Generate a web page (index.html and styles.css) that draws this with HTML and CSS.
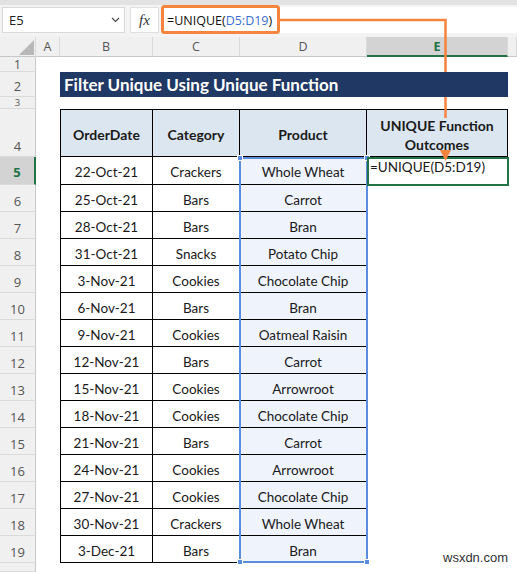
FILE: index.html
```html
<!DOCTYPE html>
<html>
<head>
<meta charset="utf-8">
<link rel="stylesheet" href="styles.css">
</head>
<body>
<div class="app">
  <div class="top"></div>
  <div class="fbar">
    <div class="namebox"><span>E5</span>
      <svg class="chev" width="9" height="6" viewBox="0 0 9 6"><path d="M1 1 L4.5 4.5 L8 1" fill="none" stroke="#444" stroke-width="1.1"/></svg>
    </div>
    <div class="fxbox"><span class="fx">fx</span></div>
    <div class="formula"><span>=UNIQUE(</span><span class="ref">D5:D19</span><span>)</span></div>
  </div>
  <div class="sheet">
    <!-- column headers -->
    <div class="ch corner"><svg width="36" height="20" viewBox="0 0 36 20"><polygon points="34,3 34,18 19,18" fill="#b8b8b8"/></svg></div>
    <div class="ch">A</div><div class="ch">B</div><div class="ch">C</div><div class="ch">D</div><div class="ch sel">E</div><div class="ch"></div>
    <!-- row 1 -->
    <div class="rh mid">1</div><div></div><div></div><div></div><div></div><div></div><div></div>
    <!-- row 2 -->
    <div class="rh">2</div><div></div><div class="title">Filter Unique Using Unique Function</div><div></div>
    <!-- row 3 -->
    <div class="rh clip">3</div><div></div><div></div><div></div><div></div><div></div><div></div>
    <!-- row 4 -->
    <div class="rh">4</div><div></div>
    <div class="t th first">OrderDate</div><div class="t th">Category</div><div class="t th">Product</div><div class="t th">UNIQUE Function<br>Outcomes</div><div></div>
    <!-- data -->
    <div class="rh sel">5</div><div></div><div class="t first">22-Oct-21</div><div class="t">Crackers</div><div class="t d">Whole Wheat</div><div class="ecell">=UNIQUE(D5:D19)</div><div></div>
    <div class="rh">6</div><div></div><div class="t first">25-Oct-21</div><div class="t">Bars</div><div class="t d">Carrot</div><div></div><div></div>
    <div class="rh">7</div><div></div><div class="t first">28-Oct-21</div><div class="t">Bars</div><div class="t d">Bran</div><div></div><div></div>
    <div class="rh">8</div><div></div><div class="t first">31-Oct-21</div><div class="t">Snacks</div><div class="t d">Potato Chip</div><div></div><div></div>
    <div class="rh">9</div><div></div><div class="t first">3-Nov-21</div><div class="t">Cookies</div><div class="t d">Chocolate Chip</div><div></div><div></div>
    <div class="rh">10</div><div></div><div class="t first">6-Nov-21</div><div class="t">Bars</div><div class="t d">Bran</div><div></div><div></div>
    <div class="rh">11</div><div></div><div class="t first">9-Nov-21</div><div class="t">Cookies</div><div class="t d">Oatmeal Raisin</div><div></div><div></div>
    <div class="rh">12</div><div></div><div class="t first">12-Nov-21</div><div class="t">Bars</div><div class="t d">Carrot</div><div></div><div></div>
    <div class="rh">13</div><div></div><div class="t first">15-Nov-21</div><div class="t">Cookies</div><div class="t d">Arrowroot</div><div></div><div></div>
    <div class="rh">14</div><div></div><div class="t first">18-Nov-21</div><div class="t">Cookies</div><div class="t d">Chocolate Chip</div><div></div><div></div>
    <div class="rh">15</div><div></div><div class="t first">21-Nov-21</div><div class="t">Bars</div><div class="t d">Carrot</div><div></div><div></div>
    <div class="rh">16</div><div></div><div class="t first">24-Nov-21</div><div class="t">Cookies</div><div class="t d">Arrowroot</div><div></div><div></div>
    <div class="rh">17</div><div></div><div class="t first">27-Nov-21</div><div class="t">Cookies</div><div class="t d">Chocolate Chip</div><div></div><div></div>
    <div class="rh">18</div><div></div><div class="t first">30-Nov-21</div><div class="t">Crackers</div><div class="t d">Whole Wheat</div><div></div><div></div>
    <div class="rh">19</div><div></div><div class="t first">3-Dec-21</div><div class="t">Bars</div><div class="t d">Bran</div><div></div><div></div>
    <div class="rh"></div><div></div><div></div><div></div><div></div><div></div><div></div>

    <div class="range">
      <span class="hd tl"></span><span class="hd tr"></span><span class="hd bl"></span><span class="hd br"></span>
    </div>
    <div class="active"></div>
  </div>

  <svg class="anno" width="517" height="572" viewBox="0 0 517 572">
    <rect x="162.5" y="6.5" width="116" height="26" rx="2" fill="none" stroke="#f5843f" stroke-width="3"/>
    <polyline points="280,20 445.5,20 445.5,72" fill="none" stroke="#f5843f" stroke-width="2.5"/>
    <line x1="445.5" y1="97" x2="445.5" y2="118" stroke="#f5843f" stroke-width="2.5"/>
    <polygon points="440,150 451,150 445.5,161" fill="#f5843f"/>
  </svg>
  <div class="wm">wsxdn.com</div>
</div>
</body>
</html>
```

FILE: styles.css
```css
* { box-sizing: border-box; margin: 0; padding: 0; }
body { margin: 0; width: 517px; height: 572px; overflow: hidden; background: #fff; }
.app { position: relative; width: 517px; height: 572px; background: #f3f3f3; font-family: "Lato", sans-serif; color: #1a1a1a; }
.top { height: 5px; background: #e2e2e2; }
.fbar { display: flex; height: 26px; margin-top: 2px; margin-bottom: 4px; }
.namebox { width: 123px; margin-left: 2px; background: #fff; border: 1px solid #d9d9d9; display: flex; align-items: center; justify-content: space-between; padding: 0 4px 0 6px; font: 13px "Open Sans", sans-serif; color: #222; }
.fxbox { width: 29px; margin-left: 5px; background: #fff; border: 1px solid #e0e0e0; display: flex; align-items: center; justify-content: center; }
.fx { font: italic 15px "Liberation Serif", serif; color: #333; }
.formula { flex: 1; margin-left: 3px; background: #fff; display: flex; align-items: center; padding-left: 5px; font: 12.5px "Open Sans", sans-serif; color: #111; }
.ref { color: #3a6fd0; }

.sheet { position: relative; display: grid; grid-template-columns: 36px 24px 93px 87px 127px 141px 9px; grid-template-rows: 20px 15px 25px 12px 48px 28px repeat(14, 27px) 9px; background: #fff; }
.ch { background: #f0f0f0; border-right: 1px solid #dadada; border-bottom: 1px solid #c8c8c8; font: 12.5px "Open Sans", sans-serif; color: #555; display: flex; align-items: center; justify-content: center; }
.ch.corner { display: block; }
.ch.sel { background: #d3d3d3; color: #217346; font-weight: 700; border-bottom: 2px solid #217346; }
.rh { background: #f0f0f0; border-right: 1px solid #c8c8c8; border-bottom: 1px solid #dadada; font: 13px "Open Sans", sans-serif; color: #555; display: flex; align-items: flex-end; justify-content: center; line-height: 1; padding-bottom: 3px; overflow: hidden; }
.rh.mid { align-items: center; padding-bottom: 0; font-size: 12px; line-height: 13px; }
.rh.clip { align-items: center; padding: 0; font-size: 9.5px; line-height: 10px; }
.rh.sel { background: #d3d3d3; color: #217346; font-weight: 700; border-right: 2px solid #217346; padding-bottom: 5px; }

.title { grid-column: span 4; background: #203864; color: #fff; font-weight: 700; font-size: 17px; display: flex; align-items: center; padding-left: 4px; }

.t { border-right: 1px solid #000; border-bottom: 1px solid #000; display: flex; align-items: center; justify-content: center; text-align: center; font-size: 13.5px; padding-top: 3px; }
.t.first { border-left: 1px solid #000; }
.th { background: #dce6f1; border-top: 1px solid #000; font-weight: 700; font-size: 14px; line-height: 19px; padding-top: 3px; }
.t.d { background: #eef3fc; }
.ecell { font-size: 13.5px; padding: 2px 0 0 3px; white-space: nowrap; }

.range { position: absolute; left: 239px; top: 120px; width: 129px; height: 406px; border: 2px solid #5b8ddd; }
.hd { position: absolute; width: 6px; height: 6px; background: #5b8ddd; border: 1px solid #fff; }
.hd.tl { left: -4px; top: -4px; }
.hd.tr { right: -4px; top: -4px; }
.hd.bl { left: -4px; bottom: -4px; }
.hd.br { right: -4px; bottom: -4px; }
.active { position: absolute; left: 367px; top: 120px; width: 142px; height: 29px; border: 2px solid #217346; }

.anno { position: absolute; left: 0; top: 0; pointer-events: none; }
.wm { position: absolute; left: 443px; top: 550px; font: 13px "Liberation Sans", sans-serif; color: #333; }
```
